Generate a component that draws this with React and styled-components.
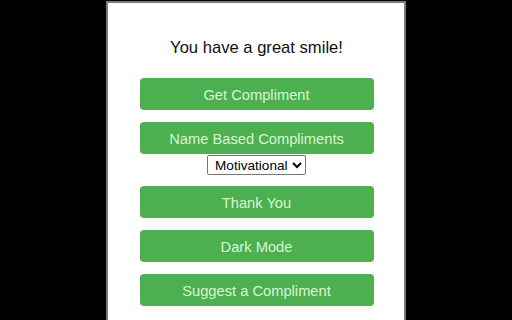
import React from "react";
import styled, { createGlobalStyle } from "styled-components";

const Global = createGlobalStyle`
  html, body {
    margin: 0;
    padding: 0;
    background: #000;
    overflow: hidden;
  }
  body {
    font-family: "Liberation Sans", Arial, sans-serif;
  }
`;

const Page = styled.div`
  width: 512px;
  height: 320px;
  background: #000;
  display: flex;
  justify-content: center;
  align-items: flex-start;
  overflow: hidden;
`;

const Card = styled.div`
  box-sizing: border-box;
  width: 300px;
  min-height: 340px;
  margin-top: 1px;
  margin-left: -1px;
  background: #fff;
  border: 2px solid #7c7c7c;
  border-bottom: none;
  padding-top: 35px;
  display: flex;
  flex-direction: column;
  align-items: center;
`;

const Title = styled.h1`
  margin: 0 0 20px;
  font-family: "Liberation Sans", Arial, sans-serif;
  font-weight: normal;
  font-size: 16.6px;
  line-height: 20px;
  color: #111;
  transform: translateX(1px);
`;

const Button = styled.button`
  box-sizing: border-box;
  width: 234px;
  height: 32px;
  margin: 0 0 ${(p) => p.$gap}px;
  transform: translateX(1px);
  border: none;
  border-radius: 4px;
  background: #4caf50;
  color: #d8f7d0;
  font-family: "Liberation Sans", Arial, sans-serif;
  font-size: 14.7px;
  padding: 2px 0 0;
  cursor: pointer;
`;

const Select = styled.select`
  box-sizing: border-box;
  height: 20px;
  width: 99px;
  margin: 0 0 11px;
  transform: translateX(1px);
  font-family: "Liberation Sans", Arial, sans-serif;
  font-size: 13.6px;
  color: #000;
  background: #fff;
  border: 1px solid #767676;
  border-radius: 2px;
  padding: 0 0 0 3px;
`;

export default function App() {
  return (
    <>
      <Global />
      <Page>
        <Card>
          <Title>You have a great smile!</Title>
          <Button $gap={12}>Get Compliment</Button>
          <Button $gap={1}>Name Based Compliments</Button>
          <Select defaultValue="Motivational">
            <option>Motivational</option>
            <option>Funny</option>
            <option>Romantic</option>
          </Select>
          <Button $gap={12}>Thank You</Button>
          <Button $gap={12}>Dark Mode</Button>
          <Button $gap={12}>Suggest a Compliment</Button>
        </Card>
      </Page>
    </>
  );
}
